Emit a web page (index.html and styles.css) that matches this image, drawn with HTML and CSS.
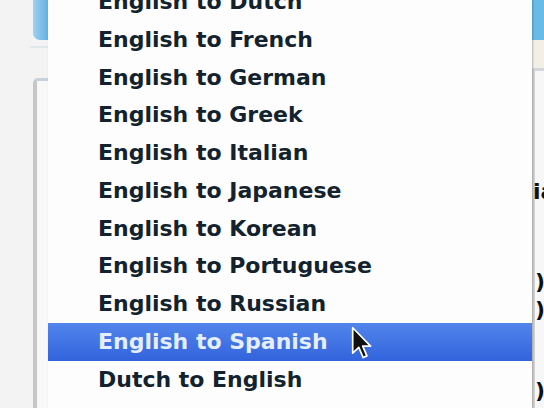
FILE: index.html
```html
<!DOCTYPE html>
<html>
<head>
<meta name="viewport" content="width=device-width, initial-scale=1">
<link rel="stylesheet" href="styles.css">
</head>
<body>

<div class="screen">
  <div class="side side-left">
    <div class="tab"></div>
    <div class="gap"></div>
    <div class="panel"></div>
  </div>

  <div class="menu">
    <ul class="items">
      <li>English to Dutch</li>
      <li>English to French</li>
      <li>English to German</li>
      <li>English to Greek</li>
      <li>English to Italian</li>
      <li>English to Japanese</li>
      <li>English to Korean</li>
      <li>English to Portuguese</li>
      <li>English to Russian</li>
      <li class="selected">English to Spanish</li>
      <li>Dutch to English</li>
      <li>French to English</li>
    </ul>
    <!-- mouse pointer over the selected row -->
    <svg class="cursor" width="22" height="34" viewBox="0 0 13 20">
      <path d="M1 1 L1 16 L4.6 12.6 L7.2 18.6 L9.4 17.6 L6.9 11.8 L11.6 11.8 Z" fill="#111" stroke="#fff" stroke-width="1" stroke-linejoin="round"/>
    </svg>
  </div>

  <div class="side side-right">
    <div class="tab"></div>
    <div class="strip"></div>
    <div class="panel">
      <p class="frag frag-a">ia</p>
      <p class="frag frag-b">)</p>
      <p class="frag frag-c">)</p>
      <p class="frag frag-d">)</p>
    </div>
  </div>
</div>

</body>
</html>
```

FILE: styles.css
```css
body {
  margin: 0;
  background-color: #f3f3f3;
  overflow: hidden;
  font-family: "DejaVu Sans", "Liberation Sans", sans-serif;
}

.screen {
  display: flex;
  height: 408px;
}

/* Window parts peeking out on both sides of the menu */
.side {
  display: flex;
  flex-direction: column;
}

.side-left {
  width: 48px;
}

.side-left .tab {
  height: 40px;
  margin-left: 33px;
  background: linear-gradient(to right, #9fd0ee, #62b2e4);
  border-bottom-left-radius: 7px;
}

.side-left .gap {
  height: 30px;
  border-top: 2px solid #e2e7ea;
  margin-top: 6px;
  margin-left: 30px;
}

.side-left .panel {
  flex: 1;
  margin-left: 33px;
  border-left: 4px solid #c6c6c6;
  border-top: 3px solid #c8d2dc;
  border-top-left-radius: 5px;
  background-color: #f8f8f8;
}

.side-right {
  flex: 1;
  overflow: hidden;
}

.side-right .tab {
  height: 40px;
  background: #68bbe9;
}

.side-right .strip {
  height: 28px;
  background-color: #f2efe6;
  border-bottom: 3px solid #d3d6da;
}

.side-right .panel {
  flex: 1;
  background-color: #f7f7f7;
  border-left: 3px solid #d5d5d5;
}

.frag {
  margin: 0;
  height: 0;
  font-size: 22px;
  font-weight: bold;
  color: #111;
  white-space: nowrap;
}

.frag-a { padding-top: 108px; margin-left: -2px; }
.frag-b { padding-top: 90px; }
.frag-c { padding-top: 28px; }
.frag-d { padding-top: 81px; }

/* The pop-up menu */
.menu {
  position: relative;
  width: 484px;
  background-color: #fdfdfd;
  box-shadow: 1px 0 2px rgba(0, 0, 0, 0.25);
  overflow: hidden;
}

.items {
  list-style: none;
  margin: -17px 0 0;
  padding: 0;
}

.items li {
  height: 37.75px;
  line-height: 37.75px;
  padding-left: 50px;
  font-size: 22px;
  font-weight: bold;
  color: #12222e;
  white-space: nowrap;
}

.items li.selected {
  background: linear-gradient(to bottom, #5285ec, #3263dc);
  color: #e4eeff;
}

.cursor {
  position: absolute;
  left: 303px;
  top: 326px;
}
```
